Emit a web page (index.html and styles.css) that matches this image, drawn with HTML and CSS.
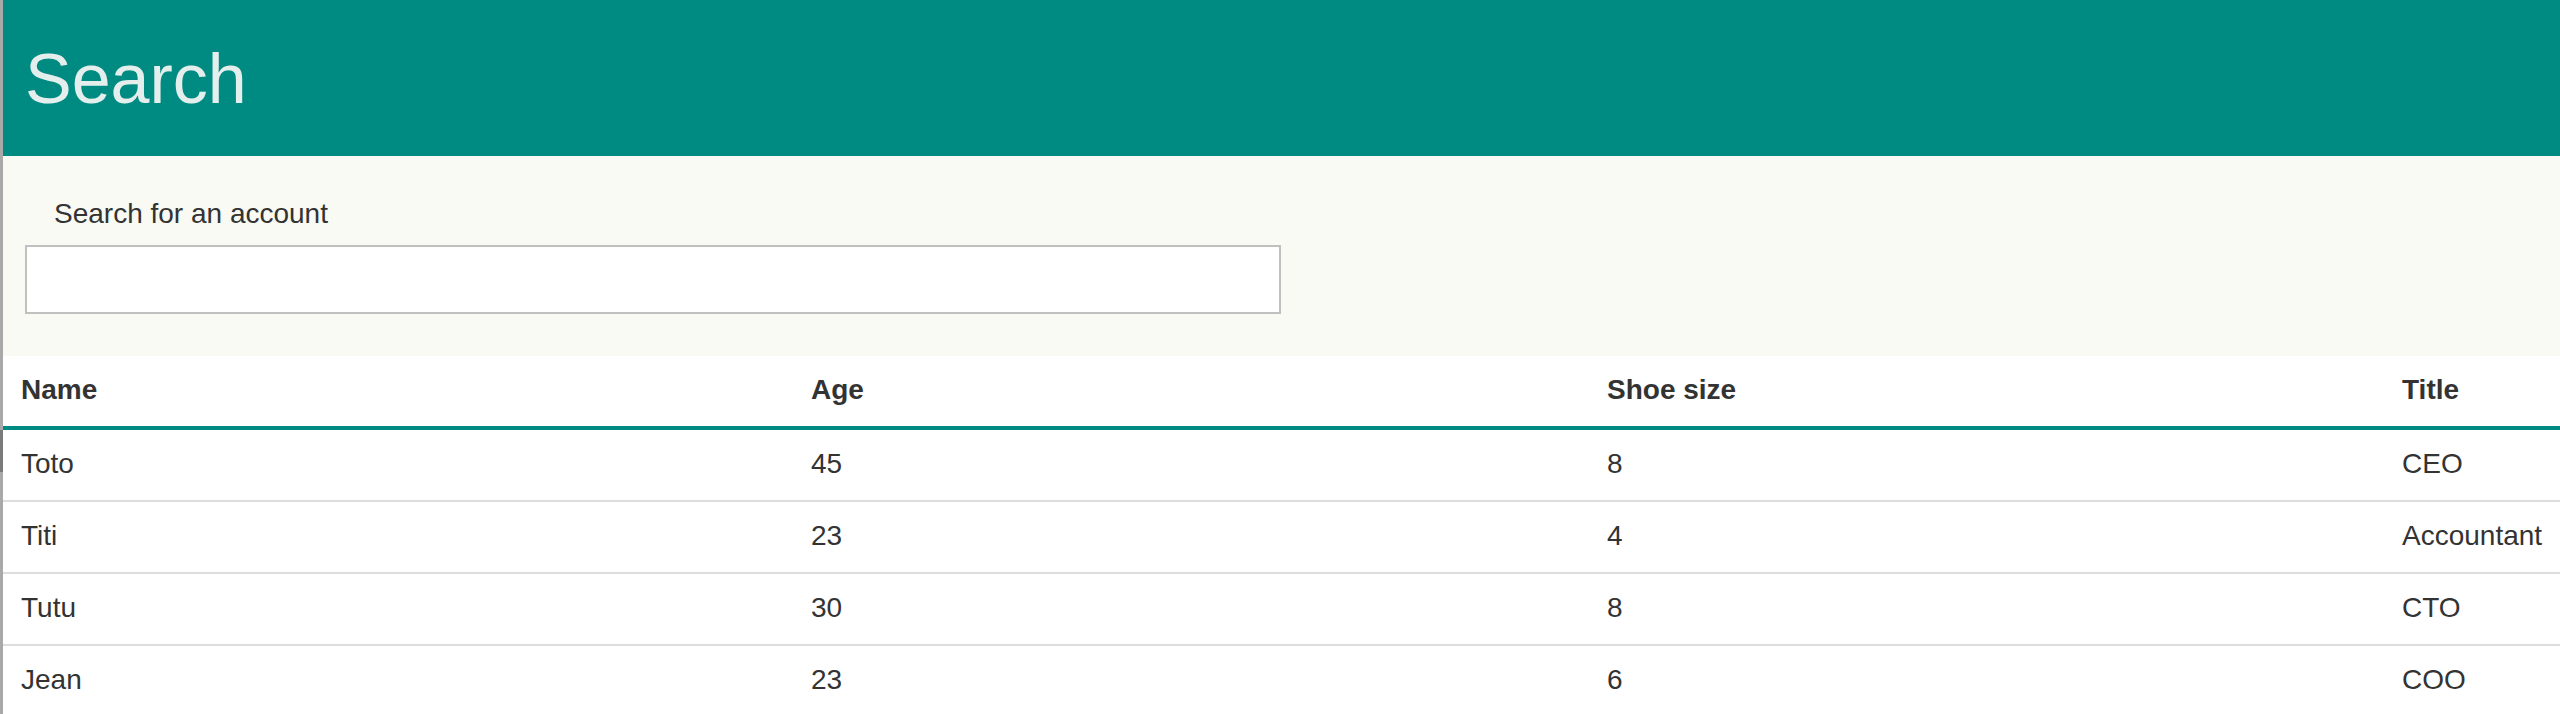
FILE: index.html
```html
<!DOCTYPE html>
<html>
<head>
<meta charset="utf-8">
<link rel="stylesheet" href="styles.css">
</head>
<body>
<div class="frame">
  <div class="edge-thumb"></div>
  <header class="topbar">
    <h1 class="title">Search</h1>
  </header>
  <section class="panel">
    <label class="label" for="q">Search for an account</label>
    <input class="search" id="q" type="text">
  </section>
  <table class="grid">
    <colgroup>
      <col class="c1"><col class="c2"><col class="c3"><col class="c4">
    </colgroup>
    <thead>
      <tr><th>Name</th><th>Age</th><th>Shoe size</th><th>Title</th></tr>
    </thead>
    <tbody>
      <tr><td>Toto</td><td>45</td><td>8</td><td>CEO</td></tr>
      <tr><td>Titi</td><td>23</td><td>4</td><td>Accountant</td></tr>
      <tr><td>Tutu</td><td>30</td><td>8</td><td>CTO</td></tr>
      <tr><td>Jean</td><td>23</td><td>6</td><td>COO</td></tr>
    </tbody>
  </table>
</div>
</body>
</html>
```

FILE: styles.css
```css
html, body {
  margin: 0;
  padding: 0;
  background: #ffffff;
  overflow: hidden;
}
body {
  font-family: "Liberation Sans", Arial, Helvetica, sans-serif;
  color: #333333;
}
.frame {
  position: relative;
  border-left: 3px solid #a9a9a9;
  min-height: 714px;
  box-sizing: border-box;
}
.edge-thumb {
  position: absolute;
  left: -3px;
  top: 430px;
  width: 3px;
  height: 42px;
  background: #7a7a7a;
}
.topbar {
  background: #008b82;
  height: 156px;
  box-sizing: border-box;
  padding: 44px 0 0 22px;
}
.title {
  margin: 0;
  font-size: 70px;
  line-height: 70px;
  font-weight: normal;
  color: #e4efed;
}
.panel {
  background: #f9faf4;
  padding: 42px 0 42px 22px;
  display: flex;
  flex-direction: column;
  align-items: flex-start;
}
.label {
  font-size: 28px;
  line-height: 32px;
  margin-left: 29px;
  color: #333333;
}
.search {
  margin: 15px 0 0 0;
  width: 1256px;
  height: 69px;
  box-sizing: border-box;
  border: 2px solid #c0c0c0;
  background: #ffffff;
  padding: 0 16px;
  font-family: inherit;
  font-size: 28px;
  outline: none;
}
.grid {
  border-collapse: collapse;
  table-layout: fixed;
  width: 2557px;
  font-size: 28px;
  line-height: 32px;
}
.c1 { width: 790px; }
.c2 { width: 796px; }
.c3 { width: 795px; }
.c4 { width: 176px; }
.grid th, .grid td {
  text-align: left;
  padding: 18px 0 20px 18px;
  white-space: nowrap;
  overflow: visible;
}
.grid th {
  font-weight: bold;
  color: #333333;
  border-bottom: 4px solid #008b82;
}
.grid td {
  color: #333333;
  border-bottom: 2px solid #dddddd;
}
```
